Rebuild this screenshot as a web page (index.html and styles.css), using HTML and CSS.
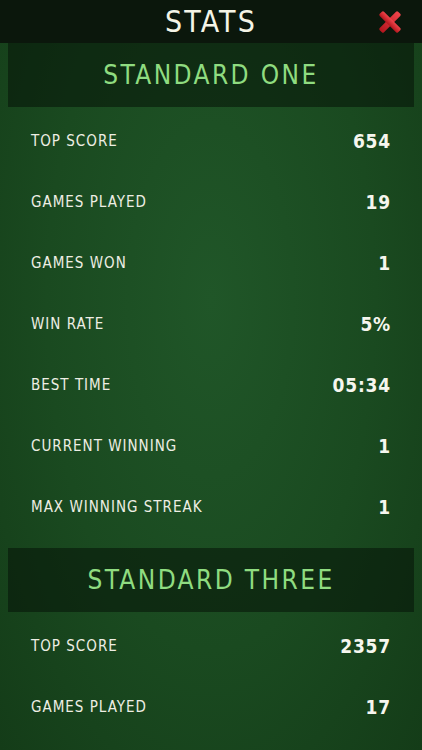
FILE: index.html
```html
<!DOCTYPE html>
<html lang="en">
<head>
    <meta charset="UTF-8">
    <meta name="viewport" content="width=device-width, initial-scale=1.0">
    <title>Stats</title>
    <link rel="stylesheet" href="styles.css">
</head>
<body>
    <div class="header">
        <h1>STATS</h1>
        <button class="close-btn" aria-label="Close">
            <svg width="28" height="28" viewBox="0 0 28 28">
                <defs>
                    <linearGradient id="red" x1="0" y1="0" x2="0" y2="1">
                        <stop offset="0" stop-color="#f0444a"/>
                        <stop offset="1" stop-color="#b3161e"/>
                    </linearGradient>
                </defs>
                <g transform="rotate(45 14 14)">
                    <rect x="11" y="1" width="6" height="26" rx="1.5" fill="url(#red)"/>
                    <rect x="1" y="11" width="26" height="6" rx="1.5" fill="url(#red)"/>
                </g>
            </svg>
        </button>
    </div>

    <div class="section">
        <h2 class="section-title">STANDARD ONE</h2>
        <div class="stat-list">
            <div class="stat-row"><span class="label">TOP SCORE</span><span class="value">654</span></div>
            <div class="stat-row"><span class="label">GAMES PLAYED</span><span class="value">19</span></div>
            <div class="stat-row"><span class="label">GAMES WON</span><span class="value">1</span></div>
            <div class="stat-row"><span class="label">WIN RATE</span><span class="value">5%</span></div>
            <div class="stat-row"><span class="label">BEST TIME</span><span class="value">05:34</span></div>
            <div class="stat-row"><span class="label">CURRENT WINNING</span><span class="value">1</span></div>
            <div class="stat-row"><span class="label">MAX WINNING STREAK</span><span class="value">1</span></div>
        </div>
    </div>

    <div class="section">
        <h2 class="section-title">STANDARD THREE</h2>
        <div class="stat-list">
            <div class="stat-row"><span class="label">TOP SCORE</span><span class="value">2357</span></div>
            <div class="stat-row"><span class="label">GAMES PLAYED</span><span class="value">17</span></div>
        </div>
    </div>
</body>
</html>
```

FILE: styles.css
```css
* {
    margin: 0;
    padding: 0;
    box-sizing: border-box;
}

html, body {
    height: 100%;
}

body {
    font-family: "DejaVu Sans Condensed", "DejaVu Sans", sans-serif;
    font-stretch: condensed;
    background: radial-gradient(ellipse at 50% 40%, #205628 0%, #1a4a20 55%, #143c18 100%);
    background-attachment: fixed;
    color: #f2f2ea;
    overflow: hidden;
}

.header {
    height: 43px;
    background-color: #0b170c;
    display: flex;
    align-items: center;
    justify-content: center;
    position: relative;
}

.header h1 {
    font-size: 30px;
    font-weight: normal;
    letter-spacing: 2.2px;
    color: #f4f4e6;
}

.close-btn {
    position: absolute;
    right: 18px;
    top: 8px;
    background: none;
    border: none;
    width: 28px;
    height: 28px;
}

.section {
    margin-bottom: 11px;
}

.section-title {
    margin: 0 8px;
    height: 64px;
    background-color: rgba(6, 18, 7, 0.55);
    display: flex;
    align-items: center;
    justify-content: center;
    font-size: 26px;
    font-weight: normal;
    letter-spacing: 2.4px;
    color: #8fdc80;
}

.stat-list {
    padding-top: 3px;
}

.stat-row {
    height: 61px;
    display: flex;
    align-items: center;
    justify-content: space-between;
    padding: 0 31px;
}

.label {
    font-size: 15px;
    letter-spacing: 1px;
    color: #eeeee4;
}

.value {
    font-size: 19px;
    font-weight: bold;
    letter-spacing: 0.8px;
    color: #f6f6ee;
}
```
